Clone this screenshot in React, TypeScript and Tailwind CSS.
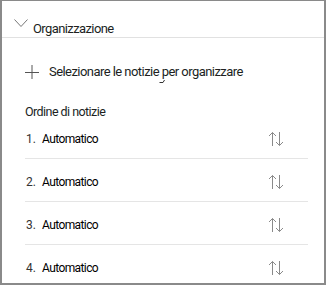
import { Fragment } from 'react';

const ROWS = [1, 2, 3, 4];

function SortIcon() {
  return (
    <svg width="16" height="16" viewBox="0 0 16 16" fill="none" stroke="#8a8a8a" strokeWidth={1}>
      <path d="M4.5 15V1.5M1 5l3.5-3.5L8 5" />
      <path d="M11.5 1v13.5M8 11l3.5 3.5L15 11" />
    </svg>
  );
}

export default function App() {
  return (
    <div
      className="w-[326px] h-[285px] bg-white border-t border-l-2 border-r-2 border-b-2 border-[#8a8a8a] flex flex-col text-[#201f1e]"
      style={{ fontFamily: 'Roboto, "Liberation Sans", sans-serif' }}
    >
      {/* header */}
      <div className="h-[39px] flex items-start border-b border-[#e1e1e1] pl-[11px] pt-[16px]">
        <svg width="16" height="10" viewBox="0 0 16 10" fill="none" stroke="#777" strokeWidth={1} className="mt-[1px]">
          <path d="M1.5 1.5l6.5 7 6.5-7" />
        </svg>
        <span className="ml-[4px] mt-[4px] text-[13px] leading-[16px] tracking-[-0.6px]">Organizzazione</span>
      </div>

      {/* add button */}
      <div className="flex items-center pl-[22px] mt-[26px] h-[16px]">
        <svg width="16" height="16" viewBox="0 0 16 16" fill="none" stroke="#555" strokeWidth={1}>
          <path d="M8 1v14M1 8.5h14" />
        </svg>
        <span className="relative ml-[9px] text-[13px] leading-[16px] tracking-[-0.55px]">
          Selezionare le notizie per organizzare
          <svg width="6" height="4" viewBox="0 0 6 4" className="absolute left-[110px] top-[15px]" fill="none" stroke="#333" strokeWidth={1}>
            <path d="M0.5 3.5h3.5l1.5-2.5" />
          </svg>
        </span>
      </div>

      {/* list */}
      <div className="pl-[22px] pr-[16px] mt-[24px]">
        <div className="text-[12.5px] leading-[16px] tracking-[-0.55px] pl-[1px]">Ordine di notizie</div>
        <div className="mt-[3px]">
          {ROWS.map((n, i) => (
            <Fragment key={n}>
              {i > 0 && <div className="h-px bg-[#e5e5e5] ml-[1px]" />}
              <div className={`flex items-center pl-[2px] pr-[24px] ${i === 0 ? 'pt-[8px] pb-[11px]' : 'pt-[15px] pb-[11px]'}`}>
                <span className="w-[16px] text-[12px] leading-[16px] text-[#333]">{n}.</span>
                <span className="flex-1 text-[12px] leading-[16px] tracking-[-0.6px] text-black">Automatico</span>
                <SortIcon />
              </div>
            </Fragment>
          ))}
        </div>
      </div>
    </div>
  );
}
